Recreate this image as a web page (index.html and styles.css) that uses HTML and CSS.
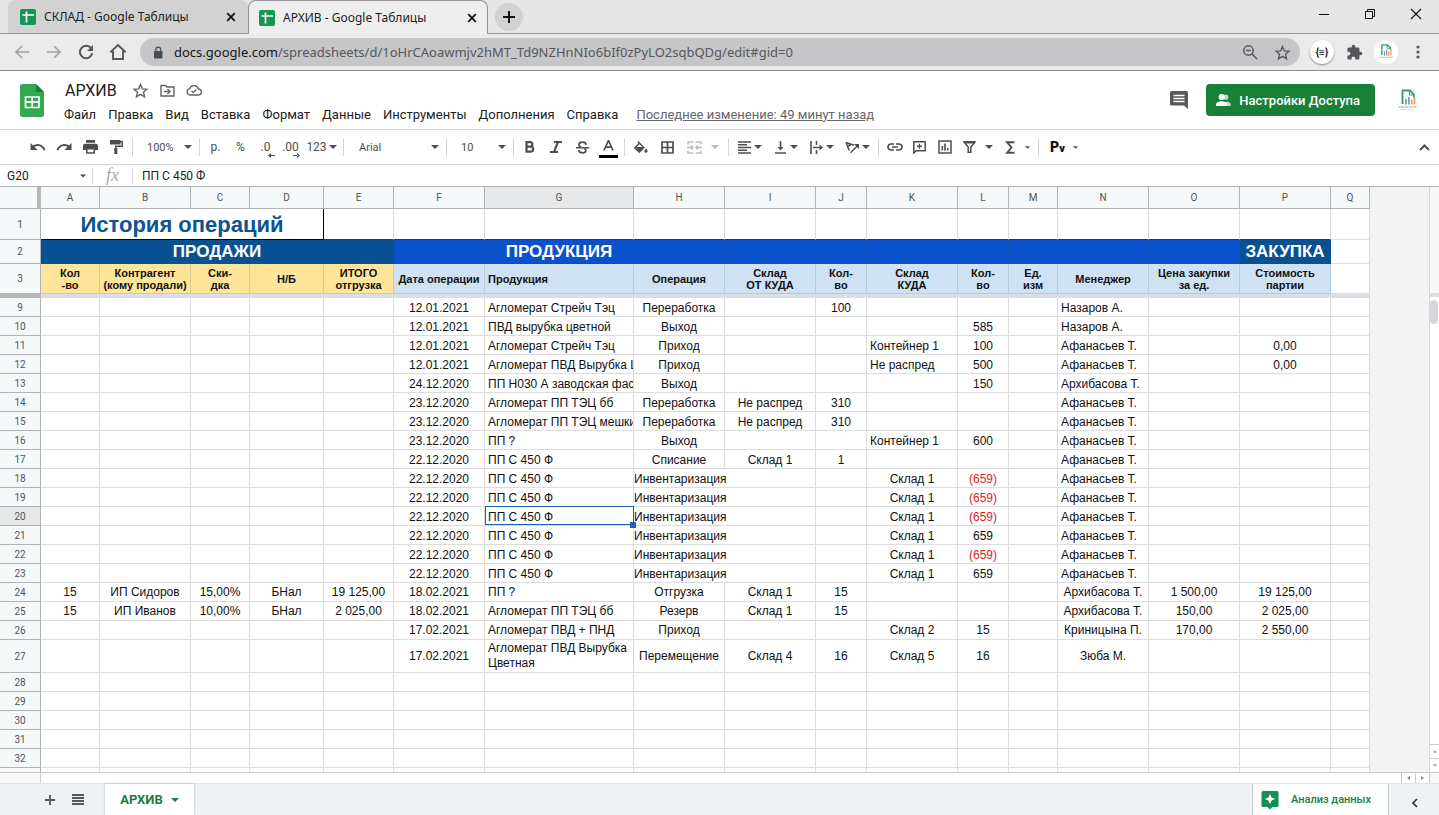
FILE: index.html
```html
<!DOCTYPE html>
<html lang="ru">
<head>
<meta charset="utf-8">
<meta name="viewport" content="width=device-width, initial-scale=1">
<title>АРХИВ - Google Таблицы</title>
<link rel="stylesheet" href="styles.css">
</head>
<body>
<svg class="defs" aria-hidden="true">
  <symbol id="caret" viewBox="0 0 8 4"><path d="M0 0h8L4 4z" fill="currentColor"/></symbol>
  <symbol id="x" viewBox="0 0 10 10"><path d="M1.200 1.200l7.600 7.600M8.800 1.200L1.200 8.800" stroke="currentColor" stroke-width="1.800" fill="none"/></symbol>
  <symbol id="favicon" viewBox="0 0 16 16"><rect width="16" height="16" rx="2" fill="#179554"/><path d="M6.500 2.500v11M2.500 6h11.500" stroke="#fff" stroke-width="1.700"/></symbol>
  <symbol id="star" viewBox="0 0 24 24"><path d="M12 3.600l2.600 6 6.500.6-4.900 4.300 1.500 6.400-5.700-3.400-5.700 3.400 1.500-6.400-4.900-4.300 6.500-.6z" fill="none" stroke="currentColor" stroke-width="1.900"/></symbol>
  <symbol id="brand" viewBox="0 0 24 24"><path d="M6.500 16V2.500H14l4 4V9" fill="none" stroke="#2f9e6c" stroke-width="1.800"/><path d="M13.500 2.500V7H18" fill="none" stroke="#2f9e6c" stroke-width="1.200"/><path d="M10 16.500V11M13 16.500V9" stroke="#6f8ca8" stroke-width="1.600"/><path d="M15.800 16.500v-5M18.500 16.500V9" stroke="#e79a52" stroke-width="1.600"/><path d="M2.500 19h19" stroke="#7fa08e" stroke-dasharray="2 .6"/><path d="M5 21.500h14" stroke="#c9d8cf" stroke-dasharray="1.500 .8"/></symbol>
</svg>

<header class="tabstrip">
  <div class="tab">
    <svg width="16" height="16"><use href="#favicon"/></svg><span>СКЛАД - Google Таблицы</span>
    <button aria-label="Закрыть вкладку"><svg width="10" height="10"><use href="#x"/></svg></button>
  </div>
  <div class="tab tab-active">
    <svg width="16" height="16"><use href="#favicon"/></svg><span>АРХИВ - Google Таблицы</span>
    <button aria-label="Закрыть вкладку"><svg width="10" height="10"><use href="#x"/></svg></button>
  </div>
  <button class="newtab" aria-label="Новая вкладка"><svg width="12" height="12" viewBox="0 0 12 12"><path d="M6 0v12M0 6h12" stroke="#111" stroke-width="2"/></svg></button>
  <div class="wincontrols">
    <button aria-label="Свернуть"><svg width="12" height="12" viewBox="0 0 12 12"><path d="M1 6.500h10" stroke="#111"/></svg></button>
    <button aria-label="Развернуть"><svg width="12" height="12" viewBox="0 0 12 12"><path d="M1.500 3.500h7v7h-7zM3.500 3.500v-2h7v7h-2" fill="none" stroke="#111"/></svg></button>
    <button aria-label="Закрыть"><svg width="12" height="12" viewBox="0 0 12 12"><path d="M1 1l10 10M11 1L1 11" stroke="#111" stroke-width="1.200"/></svg></button>
  </div>
</header>

<nav class="navbar" aria-label="Браузер">
  <button class="dim" aria-label="Назад"><svg width="16" height="16" viewBox="0 0 16 16"><path d="M15 8H2.500M8 2L2 8l6 6" fill="none" stroke="currentColor" stroke-width="1.700"/></svg></button>
  <button class="dim" aria-label="Вперёд"><svg width="16" height="16" viewBox="0 0 16 16"><path d="M1 8h12.500M8 2l6 6-6 6" fill="none" stroke="currentColor" stroke-width="1.700"/></svg></button>
  <button aria-label="Обновить"><svg width="16" height="16" viewBox="0 0 16 16"><path d="M13.200 4.500A6.200 6.200 0 1 0 14.200 9.300" fill="none" stroke="currentColor" stroke-width="2"/><path d="M15 1v6H9z" fill="currentColor"/></svg></button>
  <button aria-label="Главная"><svg width="18" height="18" viewBox="0 0 18 18"><path d="M1.300 9.300L9 2l7.700 7.300M4 8v8h10V8" fill="none" stroke="currentColor" stroke-width="1.900"/></svg></button>
  <div class="omnibox">
    <svg width="10" height="13" viewBox="0 0 10 13"><rect x="1" y="5" width="8.500" height="7.500" rx="1" fill="#4b4c50"/><path d="M2.800 5.500V3.500a2.400 2.400 0 0 1 4.800 0v2" fill="none" stroke="#4b4c50" stroke-width="1.300"/></svg>
    <span class="url"><b>docs.google.com</b>/spreadsheets/d/1oHrCAoawmjv2hMT_Td9NZHnNIo6bIf0zPyLO2sqbQDg/edit#gid=0</span>
    <button aria-label="Масштаб"><svg width="16" height="16" viewBox="0 0 16 16"><circle cx="6.500" cy="6.500" r="4.700" fill="none" stroke="currentColor" stroke-width="1.500"/><path d="M4.300 6.500h4.400M10 10l5 5" stroke="currentColor" stroke-width="1.600"/></svg></button>
    <button aria-label="В закладки"><svg width="17" height="17"><use href="#star"/></svg></button>
  </div>
  <button class="ext" aria-label="Расширение">{≡}</button>
  <button aria-label="Расширения"><svg width="17" height="17" viewBox="0 0 24 24"><path d="M20.500 11H19V7a2 2 0 0 0-2-2h-4V3.500a2.500 2.500 0 0 0-5 0V5H4a2 2 0 0 0-2 2v3.800h1.500a2.700 2.700 0 0 1 0 5.400H2V20a2 2 0 0 0 2 2h3.800v-1.500a2.700 2.700 0 0 1 5.400 0V22H17a2 2 0 0 0 2-2v-4h1.500a2.500 2.500 0 0 0 0-5z" fill="currentColor"/></svg></button>
  <button class="profile" aria-label="Профиль"><svg width="18" height="18"><use href="#brand"/></svg></button>
  <button aria-label="Меню"><svg width="4" height="14" viewBox="0 0 4 14"><g fill="currentColor"><circle cx="2" cy="2" r="1.600"/><circle cx="2" cy="7" r="1.600"/><circle cx="2" cy="12" r="1.600"/></g></svg></button>
</nav>

<section class="dochead">
  <svg class="logo" width="24" height="33" viewBox="0 0 24 33"><path d="M2.500 0H16l8 8v22.500a2.500 2.500 0 0 1-2.500 2.500h-19A2.500 2.500 0 0 1 0 30.500v-28A2.500 2.500 0 0 1 2.500 0z" fill="#34a853"/><path d="M16 0l8 8h-8z" fill="#188038"/><path d="M5.500 13h13.500v10.500H5.500zM12.200 13v10.500M5.500 18.200H19" fill="none" stroke="#fff" stroke-width="1.700"/></svg>
  <div class="docinfo">
    <div class="titleline">
      <h1>АРХИВ</h1>
      <button aria-label="Пометить"><svg width="17" height="17"><use href="#star"/></svg></button>
      <button aria-label="Переместить"><svg width="15" height="13" viewBox="0 0 15 13"><path d="M1 1.500h4.500L7 3h7v9H1z" fill="none" stroke="currentColor" stroke-width="1.400"/><path d="M4 7.500h5.500M7.500 5l2.500 2.500L7.500 10" fill="none" stroke="currentColor" stroke-width="1.300"/></svg></button>
      <button aria-label="Сохранено"><svg width="16" height="12" viewBox="0 0 16 12"><path d="M4 11a3.200 3.200 0 0 1-.3-6.300A4.500 4.500 0 0 1 12.300 5 3 3 0 0 1 12.400 11z" fill="none" stroke="currentColor" stroke-width="1.300"/><path d="M5.500 7l1.800 1.700 3-3.200" fill="none" stroke="currentColor" stroke-width="1.300"/></svg></button>
    </div>
    <div class="menus">
      <button>Файл</button><button>Правка</button><button>Вид</button><button>Вставка</button><button>Формат</button><button>Данные</button><button>Инструменты</button><button>Дополнения</button><button>Справка</button>
      <a href="#history">Последнее изменение: 49 минут назад</a>
    </div>
  </div>
  <button class="comments" aria-label="Комментарии"><svg width="18" height="18" viewBox="0 0 18 18"><path d="M1.500 0h15A1.500 1.500 0 0 1 18 1.500V18l-4-3.500H1.500A1.500 1.500 0 0 1 0 13V1.500A1.500 1.500 0 0 1 1.500 0z" fill="#57595c"/><path d="M3.500 4.500h11M3.500 7.500h11M3.500 10.500h11" stroke="#fff" stroke-width="1.500"/></svg></button>
  <button class="share"><svg width="15" height="12" viewBox="0 0 15 12"><circle cx="9.800" cy="3.200" r="2.600" fill="#b9dcc3"/><path d="M8 12V9l3-1.500c2 .3 3.800 1.200 3.800 2.700V12z" fill="#b9dcc3"/><circle cx="5.600" cy="3" r="3" fill="#fff"/><path d="M0 12v-1.500C0 8.500 3.300 7.300 5.600 7.300s5.600 1.200 5.600 3.200V12z" fill="#fff"/></svg>Настройки Доступа</button>
  <svg class="avatar" width="24" height="24"><use href="#brand"/></svg>
</section>

<div class="toolbar" role="toolbar" aria-label="Форматирование">
  <div class="group">
    <button class="tb" aria-label="Отменить"><svg width="16" height="8" viewBox="0 0 16 8"><path d="M2 4.500C6 .5 12.500 1.200 14.500 7.300" fill="none" stroke="currentColor" stroke-width="2"/><path d="M.5 0v7h7z" fill="currentColor"/></svg></button>
    <button class="tb" aria-label="Повторить"><svg width="16" height="8" viewBox="0 0 16 8"><path d="M14 4.500C10 .5 3.500 1.200 1.500 7.300" fill="none" stroke="currentColor" stroke-width="2"/><path d="M15.500 0v7h-7z" fill="currentColor"/></svg></button>
    <button class="tb" aria-label="Печать"><svg width="15" height="14" viewBox="0 0 15 14"><path d="M3 0h9v2.800H3zM2 3.800h11a2 2 0 0 1 2 2V10h-3V8H3v2H0V5.800a2 2 0 0 1 2-2z" fill="currentColor"/><path d="M3.800 8.700h7.400V13H3.800z" fill="none" stroke="currentColor" stroke-width="1.500"/></svg></button>
    <button class="tb" aria-label="Копировать форматирование"><svg width="13" height="14" viewBox="0 0 13 14"><path d="M0 0h10.500v4.500H0z" fill="currentColor"/><path d="M10 1.800h2.200v4.400H5.800V9" fill="none" stroke="currentColor" stroke-width="1.500"/><path d="M4.300 8h3v6h-3z" fill="currentColor"/></svg></button>
  </div>
  <div class="group">
    <label class="picker picker-s"><select aria-label="Масштаб"><option>100%</option></select><svg width="8" height="4"><use href="#caret"/></svg></label>
  </div>
  <div class="group">
    <button class="tb tb-n">р.</button>
    <button class="tb tb-n">%</button>
    <button class="tb tb-n dec" aria-label="Меньше знаков">.0<svg width="7" height="5" viewBox="0 0 7 5"><path d="M0 2.500L3 0v5zM2 2h5v1H2z" fill="currentColor"/></svg></button>
    <button class="tb tb-n dec" aria-label="Больше знаков">.00<svg width="7" height="5" viewBox="0 0 7 5"><path d="M7 2.500L4 0v5zM0 2h5v1H0z" fill="currentColor"/></svg></button>
    <button class="tb tb-fmt">123<svg width="8" height="4"><use href="#caret"/></svg></button>
  </div>
  <div class="group">
    <label class="picker picker-l"><select aria-label="Шрифт"><option>Arial</option></select><svg width="8" height="4"><use href="#caret"/></svg></label>
  </div>
  <div class="group">
    <label class="picker picker-s"><select aria-label="Размер шрифта"><option>10</option></select><svg width="8" height="4"><use href="#caret"/></svg></label>
  </div>
  <div class="group">
    <button class="tb" aria-label="Полужирный"><svg width="10" height="12" viewBox="0 0 10 12"><path d="M1.500 1.200h3.700a2.200 2.200 0 0 1 0 4.500H1.500zM1.500 5.700h4.200a2.500 2.500 0 0 1 0 5H1.500z" fill="none" stroke="currentColor" stroke-width="2.200"/></svg></button>
    <button class="tb" aria-label="Курсив"><svg width="12" height="12" viewBox="0 0 12 12"><path d="M4 1h8M0 11h8M8 1L4 11" fill="none" stroke="currentColor" stroke-width="2.100"/></svg></button>
    <button class="tb" aria-label="Зачеркнутый"><svg width="13" height="13" viewBox="0 0 13 13"><path d="M10 3.800C9.800 2 8.400 1.200 6.500 1.200 4.500 1.200 3 2.100 3 3.700c0 1.300.9 2 2 2.400M8.300 7.500c1 .4 1.500 1 1.500 1.900 0 1.500-1.300 2.400-3.200 2.400-2.100 0-3.600-.9-3.700-2.800" fill="none" stroke="currentColor" stroke-width="1.800"/><path d="M0 6.800h13" stroke="currentColor" stroke-width="1.500"/></svg></button>
    <button class="tb textcolor" aria-label="Цвет текста"><svg width="19" height="18" viewBox="0 0 19 18"><path d="M5 10.500L9.500 0.500l4.500 10M6.500 7.200h6" fill="none" stroke="currentColor" stroke-width="1.700"/><path d="M0 15h19v3H0z" fill="#000"/></svg></button>
  </div>
  <div class="group">
    <button class="tb" aria-label="Цвет заливки"><svg width="14" height="13" viewBox="0 0 14 13"><path d="M3.800.5l6 6-4.500 4.700L.8 6.700l5-5" fill="none" stroke="currentColor" stroke-width="1.400"/><path d="M1.500 6h8L5.300 11z" fill="currentColor"/><path d="M12 7.500c1 1.300 1.500 2 1.500 2.700a1.500 1.500 0 0 1-3 0c0-.7.5-1.400 1.500-2.700z" fill="currentColor"/></svg></button>
    <button class="tb" aria-label="Границы"><svg width="13" height="13" viewBox="0 0 13 13"><path d="M1 1h11v11H1zM6.500 1v11M1 6.500h11" fill="none" stroke="currentColor" stroke-width="1.700"/></svg></button>
    <button class="tb tb-merge" aria-label="Объединить" disabled><svg width="15" height="13" viewBox="0 0 15 13"><path d="M4.500 1H1v2.500M6.500 1H4.800M10.500 1H14v2.500M8.500 1h1.700M1 9.500V12h3.500M14 9.500V12h-3.500M6.300 12H4.800M8.700 12h1.500M0 6.500h5.500M15 6.500H9.500M4 4.500l2 2-2 2M11 4.500l-2 2 2 2" fill="none" stroke="currentColor" stroke-width="1.400"/></svg><svg width="8" height="4"><use href="#caret"/></svg></button>
  </div>
  <div class="group group-gap">
    <button class="tb tb-drop" aria-label="Горизонтальное выравнивание"><svg width="13" height="13" viewBox="0 0 13 13"><path d="M0 1h13M0 3.750h9M0 6.500h13M0 9.250h9M0 12h13" stroke="currentColor" stroke-width="1.600"/></svg><svg width="8" height="4"><use href="#caret"/></svg></button>
    <button class="tb tb-drop" aria-label="Вертикальное выравнивание"><svg width="13" height="13" viewBox="0 0 13 13"><path d="M1 12h11M6.500 0v7" stroke="currentColor" stroke-width="1.600"/><path d="M3.500 6h6l-3 3.500z" fill="currentColor"/></svg><svg width="8" height="4"><use href="#caret"/></svg></button>
    <button class="tb tb-drop" aria-label="Перенос текста"><svg width="13" height="13" viewBox="0 0 13 13"><path d="M1 0v13M6.500 0v4M6.500 9v4M3 6.500h7.500" stroke="currentColor" stroke-width="1.600"/><path d="M9.500 3.500v6l3.500-3z" fill="currentColor"/></svg><svg width="8" height="4"><use href="#caret"/></svg></button>
    <button class="tb tb-drop" aria-label="Поворот текста"><svg width="14" height="13" viewBox="0 0 14 13"><path d="M1 1.500l8 2.800M1 1.500l3.200 8M2.500 5.500L6 3.500M5.500 11.800l7-7" fill="none" stroke="currentColor" stroke-width="1.500"/><path d="M9 3h5v5z" fill="currentColor"/></svg><svg width="8" height="4"><use href="#caret"/></svg></button>
  </div>
  <div class="group">
    <button class="tb tb-n" aria-label="Ссылка"><svg width="16" height="8" viewBox="0 0 16 8"><path d="M7 1H4a3 3 0 0 0 0 6h3M9 1h3a3 3 0 0 1 0 6H9M5 4h6" fill="none" stroke="currentColor" stroke-width="1.700"/></svg></button>
    <button class="tb tb-n" aria-label="Комментарий"><svg width="13" height="13" viewBox="0 0 13 13"><path d="M.8.8h11.400v9H3.200L.8 12z" fill="none" stroke="currentColor" stroke-width="1.500"/><path d="M6.500 2.800v5M4 5.300h5" stroke="currentColor" stroke-width="1.400"/></svg></button>
    <button class="tb tb-n" aria-label="Диаграмма"><svg width="14" height="14" viewBox="0 0 14 14"><path d="M1 1h12v12H1z" fill="none" stroke="currentColor" stroke-width="1.500"/><path d="M4.300 10.500V6M7 10.500v-7M9.700 10.500V8" stroke="currentColor" stroke-width="1.600"/></svg></button>
    <button class="tb tb-filter" aria-label="Фильтр"><svg width="13" height="12" viewBox="0 0 13 12"><path d="M1 1h11L7.800 6v5.200H5.200V6z" fill="none" stroke="currentColor" stroke-width="1.500"/><path d="M1 0h11v2.500H2z" fill="currentColor"/></svg><svg width="8" height="4"><use href="#caret"/></svg></button>
    <button class="tb tb-sum" aria-label="Функции"><svg width="10" height="13" viewBox="0 0 10 13"><path d="M9.500 1.200H2l4.500 5.300L2 11.800h7.500" fill="none" stroke="currentColor" stroke-width="1.900"/></svg><svg width="5" height="3"><use href="#caret"/></svg></button>
  </div>
  <button class="tb tb-py">P<small>v</small><svg width="5" height="3"><use href="#caret"/></svg></button>
  <button class="tb collapse" aria-label="Свернуть панель"><svg width="11" height="7" viewBox="0 0 11 7"><path d="M1 6l4.500-4.500L10 6" fill="none" stroke="currentColor" stroke-width="2"/></svg></button>
</div>

<div class="formula">
  <label class="namebox"><input aria-label="Диапазон" value="G20"><svg width="6" height="4"><use href="#caret"/></svg></label>
  <i class="fx">fx</i>
  <input class="fxinput" aria-label="Формула" value="ПП С 450 Ф">
</div>

<main class="sheet">
  <div class="viewport">
    <table>
      <colgroup><col class="w41"><col class="w59"><col class="w91"><col class="w59"><col class="w74"><col class="w70"><col class="w91"><col class="w149"><col class="w91"><col class="w91"><col class="w51"><col class="w91"><col class="w51"><col class="w49"><col class="w91"><col class="w91"><col class="w91"><col class="w39"></colgroup>
      <thead>
        <tr><th class="corner"></th><th>A</th><th>B</th><th>C</th><th>D</th><th>E</th><th>F</th><th class="on">G</th><th>H</th><th>I</th><th>J</th><th>K</th><th>L</th><th>M</th><th>N</th><th>O</th><th>P</th><th>Q</th></tr>
      </thead>
      <tbody>
        <tr class="r1"><th>1</th><td colspan="4" class="title">История операций</td><td><td><td><td><td><td><td><td><td><td><td><td><td class="plain"></tr>
        <tr class="r2"><th>2</th><td colspan="5" class="navy">ПРОДАЖИ</td><td><td>ПРОДУКЦИЯ<td><td><td><td><td><td><td><td><td class="navy">ЗАКУПКА<td class="plain"></tr>
        <tr class="r3"><th>3</th><td class="gold">Кол<br>-во<td class="gold">Контрагент<br>(кому продали)<td class="gold">Ски-<br>дка<td class="gold">Н/Б<td class="gold">ИТОГО<br>отгрузка<td>Дата операции<td class="l">Продукция<td>Операция<td>Склад<br>ОТ КУДА<td>Кол-<br>во<td>Склад<br>КУДА<td>Кол-<br>во<td>Ед.<br>изм<td>Менеджер<td>Цена закупки<br>за ед.<td>Стоимость<br>партии<td class="plain"></tr>
        <tr class="freeze"><th></th><td colspan="17"></td></tr>
        <tr><th>9</th><td><td><td><td><td><td>12.01.2021<td class="l">Агломерат Стрейч Тэц<td>Переработка<td><td>100<td><td><td><td class="l">Назаров А.<td><td><td></tr>
        <tr><th>10</th><td><td><td><td><td><td>12.01.2021<td class="l">ПВД вырубка цветной<td>Выход<td><td><td><td>585<td><td class="l">Назаров А.<td><td><td></tr>
        <tr><th>11</th><td><td><td><td><td><td>12.01.2021<td class="l">Агломерат Стрейч Тэц<td>Приход<td><td><td class="l">Контейнер 1<td>100<td><td class="l">Афанасьев Т.<td><td>0,00<td></tr>
        <tr><th>12</th><td><td><td><td><td><td>12.01.2021<td class="l">Агломерат ПВД Вырубка Ц<td>Приход<td><td><td class="l">Не распред<td>500<td><td class="l">Афанасьев Т.<td><td>0,00<td></tr>
        <tr><th>13</th><td><td><td><td><td><td>24.12.2020<td class="l">ПП Н030 А заводская фас<td>Выход<td><td><td><td>150<td><td class="l">Архибасова Т.<td><td><td></tr>
        <tr><th>14</th><td><td><td><td><td><td>23.12.2020<td class="l">Агломерат ПП ТЭЦ бб<td>Переработка<td>Не распред<td>310<td><td><td><td class="l">Афанасьев Т.<td><td><td></tr>
        <tr><th>15</th><td><td><td><td><td><td>23.12.2020<td class="l">Агломерат ПП ТЭЦ мешки<td>Переработка<td>Не распред<td>310<td><td><td><td class="l">Афанасьев Т.<td><td><td></tr>
        <tr><th>16</th><td><td><td><td><td><td>23.12.2020<td class="l">ПП ?<td>Выход<td><td><td class="l">Контейнер 1<td>600<td><td class="l">Афанасьев Т.<td><td><td></tr>
        <tr><th>17</th><td><td><td><td><td><td>22.12.2020<td class="l">ПП С 450 Ф<td>Списание<td>Склад 1<td>1<td><td><td><td class="l">Афанасьев Т.<td><td><td></tr>
        <tr><th>18</th><td><td><td><td><td><td>22.12.2020<td class="l">ПП С 450 Ф<td class="spill">Инвентаризация<td><td><td>Склад 1<td class="neg">(659)<td><td class="l">Афанасьев Т.<td><td><td></tr>
        <tr><th>19</th><td><td><td><td><td><td>22.12.2020<td class="l">ПП С 450 Ф<td class="spill">Инвентаризация<td><td><td>Склад 1<td class="neg">(659)<td><td class="l">Афанасьев Т.<td><td><td></tr>
        <tr><th class="on">20</th><td><td><td><td><td><td>22.12.2020<td class="l selected">ПП С 450 Ф<td class="spill">Инвентаризация<td><td><td>Склад 1<td class="neg">(659)<td><td class="l">Афанасьев Т.<td><td><td></tr>
        <tr><th>21</th><td><td><td><td><td><td>22.12.2020<td class="l">ПП С 450 Ф<td class="spill">Инвентаризация<td><td><td>Склад 1<td>659<td><td class="l">Афанасьев Т.<td><td><td></tr>
        <tr><th>22</th><td><td><td><td><td><td>22.12.2020<td class="l">ПП С 450 Ф<td class="spill">Инвентаризация<td><td><td>Склад 1<td class="neg">(659)<td><td class="l">Афанасьев Т.<td><td><td></tr>
        <tr><th>23</th><td><td><td><td><td><td>22.12.2020<td class="l">ПП С 450 Ф<td class="spill">Инвентаризация<td><td><td>Склад 1<td>659<td><td class="l">Афанасьев Т.<td><td><td></tr>
        <tr class="mid"><th>24</th><td>15<td>ИП Сидоров<td>15,00%<td>БНал<td>19 125,00<td>18.02.2021<td class="l">ПП ?<td>Отгрузка<td>Склад 1<td>15<td><td><td><td>Архибасова Т.<td>1 500,00<td>19 125,00<td></tr>
        <tr class="mid"><th>25</th><td>15<td>ИП Иванов<td>10,00%<td>БНал<td>2 025,00<td>18.02.2021<td class="l">Агломерат ПП ТЭЦ бб<td>Резерв<td>Склад 1<td>15<td><td><td><td>Архибасова Т.<td>150,00<td>2 025,00<td></tr>
        <tr class="mid"><th>26</th><td><td><td><td><td><td>17.02.2021<td class="l">Агломерат ПВД + ПНД<td>Приход<td><td><td>Склад 2<td>15<td><td>Криницына П.<td>170,00<td>2 550,00<td></tr>
        <tr class="tall"><th>27</th><td><td><td><td><td><td>17.02.2021<td class="l">Агломерат ПВД Вырубка<br>Цветная<td>Перемещение<td>Склад 4<td>16<td>Склад 5<td>16<td><td>Зюба М.<td><td><td></tr>
        <tr><th>28</th><td><td><td><td><td><td><td><td><td><td><td><td><td><td><td><td><td></tr>
        <tr><th>29</th><td><td><td><td><td><td><td><td><td><td><td><td><td><td><td><td><td></tr>
        <tr><th>30</th><td><td><td><td><td><td><td><td><td><td><td><td><td><td><td><td><td></tr>
        <tr><th>31</th><td><td><td><td><td><td><td><td><td><td><td><td><td><td><td><td><td></tr>
        <tr><th>32</th><td><td><td><td><td><td><td><td><td><td><td><td><td><td><td><td><td></tr>
        <tr><th></th><td><td><td><td><td><td><td><td><td><td><td><td><td><td><td><td><td></tr>
      </tbody>
    </table>
  </div>
  <div class="vscroll">
    <div class="vhead"></div>
    <div class="thumb"></div>
    <button class="up" aria-label="Вверх"><svg width="4" height="3" viewBox="0 0 8 4"><path d="M0 4h8L4 0z" fill="currentColor"/></svg></button>
    <button aria-label="Вниз"><svg width="4" height="3"><use href="#caret"/></svg></button>
  </div>
  <div class="hscroll">
    <span class="stub"></span>
    <button aria-label="Влево"><svg width="3" height="4" viewBox="0 0 3 4"><path d="M3 0v4L0 2z" fill="currentColor"/></svg></button>
    <button aria-label="Вправо"><svg width="3" height="4" viewBox="0 0 3 4"><path d="M0 0v4l3-2z" fill="currentColor"/></svg></button>
  </div>
  <div class="scrollcorner"></div>
</main>

<footer class="sheetbar">
  <button class="add" aria-label="Добавить лист"><svg width="10" height="10" viewBox="0 0 10 10"><path d="M5 0v10M0 5h10" stroke="currentColor" stroke-width="1.800"/></svg></button>
  <button class="add" aria-label="Все листы"><svg width="12" height="11" viewBox="0 0 12 11"><path d="M0 1h12M0 4h12M0 7h12M0 10h12" stroke="currentColor" stroke-width="1.800"/></svg></button>
  <button class="sheettab">АРХИВ<svg width="8" height="4"><use href="#caret"/></svg></button>
  <button class="explore"><svg width="18" height="20" viewBox="0 0 18 20"><path d="M2 1h14a1.500 1.500 0 0 1 1.500 1.500v13A1.500 1.500 0 0 1 16 17h-4.500L9 19.500 6.500 17H2a1.500 1.500 0 0 1-1.500-1.500v-13A1.500 1.500 0 0 1 2 1z" fill="#149152"/><path d="M9 3.800l1.500 3.700L14.200 9l-3.700 1.500L9 14.200l-1.500-3.700L3.800 9l3.700-1.500z" fill="#fff"/></svg>Анализ данных</button>
  <button class="side" aria-label="Боковая панель"><svg width="7" height="10" viewBox="0 0 7 10"><path d="M6 1L2 5l4 4" fill="none" stroke="#333" stroke-width="1.700"/></svg></button>
</footer>
</body>
</html>
```
FILE: styles.css
```css
* { box-sizing: border-box; }

html, body { height: 100%; }

body {
  margin: 0;
  display: flex;
  flex-direction: column;
  height: 100vh;
  overflow: hidden;
  background: #fff;
  color: #202124;
  font-family: Roboto, "Liberation Sans", sans-serif;
  font-size: 12px;
}

button, input, select {
  font: inherit;
  color: inherit;
  background: none;
  border: 0;
  padding: 0;
  margin: 0;
  appearance: none;
  outline: none;
}

button { display: inline-flex; align-items: center; justify-content: center; }
svg { flex: none; display: block; }
.defs { position: absolute; width: 0; height: 0; }

/* Browser tabs */
.tabstrip {
  display: flex;
  align-items: stretch;
  height: 34px;
  padding-left: 8px;
  background: #e6e6e6;
  border-bottom: 1px solid #949292;
  font-family: "Noto Sans", "Open Sans", sans-serif;
  color: #1c1c1c;
}
.tab {
  display: flex;
  align-items: center;
  width: 240px;
  padding: 0 12px;
  gap: 8px;
  background: #d2d2d2;
  border-radius: 8px 8px 0 0;
}
.tab span { flex: 1; white-space: nowrap; }
.tab button { width: 10px; height: 16px; color: #111; }
.tab-active {
  background: #eee;
  border: 1px solid #949292;
  border-bottom: 0;
  margin-bottom: -1px;
  padding: 0 10px;
}
.newtab {
  width: 28px;
  height: 28px;
  margin: 3px 0 0 7px;
  border-radius: 50%;
  background: #d2d2d2;
}
.wincontrols { display: flex; margin-left: auto; height: 28px; }
.wincontrols button { width: 46px; }

/* Address row */
.navbar {
  display: flex;
  align-items: center;
  height: 37px;
  padding: 0 5px 0 6px;
  background: #ebebeb;
  border-bottom: 1px solid #8e8b8b;
  color: #55575b;
}
.navbar button { width: 32px; height: 28px; }
.navbar .dim { color: #a3a3a3; }
.omnibox {
  flex: 1;
  display: flex;
  align-items: center;
  height: 28px;
  margin: 0 6px;
  padding: 0 2px 0 13px;
  border-radius: 14px;
  background: #c6c6c8;
}
.url {
  flex: 1;
  padding-left: 11px;
  font-family: "Noto Sans", "Open Sans", sans-serif;
  font-size: 13px;
  white-space: nowrap;
  overflow: hidden;
}
.url b { font-weight: 400; color: #151515; }
.navbar .ext, .navbar .profile {
  width: 24px;
  height: 24px;
  margin: 0 4px;
  border-radius: 50%;
  background: #fff;
}
.navbar .ext {
  box-shadow: 0 1px 2px #888;
  color: #111;
  font-weight: 700;
  font-size: 10px;
}

/* Document header */
.dochead {
  display: flex;
  align-items: center;
  height: 59px;
  padding: 0 19px 0 20px;
  border-bottom: 1px solid #d5d5d5;
}
.docinfo { flex: 1; padding: 4px 0 0 14px; }
.titleline { display: flex; align-items: center; height: 24px; padding-left: 7px; color: #5f6368; }
h1 { margin: 0 10px 0 0; font-size: 16px; font-weight: 400; color: #202124; }
.titleline button { width: 27px; height: 20px; }
.menus { display: flex; align-items: center; height: 24px; font-size: 13px; white-space: nowrap; }
.menus button { padding: 0 6px; }
.menus a { margin-left: 12px; color: #63666a; }
.comments { margin-right: 18px; }
.share {
  height: 32px;
  padding: 0 15px 0 10px;
  gap: 8px;
  border-radius: 4px;
  background: #188038;
  color: #fff;
  font-weight: 500;
  font-size: 13px;
  white-space: nowrap;
}
.avatar { margin-left: 21px; }

/* Formatting toolbar */
.toolbar {
  display: flex;
  align-items: center;
  height: 35px;
  padding: 0 2px 0 22px;
  border-bottom: 1px solid #d5d5d5;
  color: #4b4e51;
}
.group {
  display: flex;
  align-items: center;
  height: 18px;
  padding: 0 3px;
  border-right: 1px solid #d5d5d5;
}
.group-gap { gap: 1px; }
.tb { width: 26px; height: 24px; }
.tb-n { width: 25px; }
.dec { position: relative; }
.dec svg { position: absolute; right: 3px; bottom: 1px; }
.tb-fmt { width: 37px; gap: 2px; }
.tb-merge { width: 45px; gap: 9px; color: #b9bbbd; }
.tb-drop { width: 35px; gap: 3px; }
.tb-filter { width: 42px; gap: 9px; }
.tb-sum { width: 36px; gap: 10px; }
.tb-py { width: 50px; color: #111; font-weight: 900; font-size: 14px; }
.tb-py small { font-size: 11px; padding-top: 2px; }
.tb-py svg { margin-left: 8px; color: #4b4e51; }
.textcolor { padding-top: 4px; }
.collapse { margin-left: auto; }
.picker { display: flex; align-items: center; justify-content: space-between; padding-right: 4px; }
.picker select { flex: 1; min-width: 0; font-size: 11px; }
.picker-s { width: 60px; padding-left: 11px; }
.picker-l { width: 96px; padding-left: 12px; }

/* Formula row */
.formula { display: flex; align-items: center; height: 21px; }
.namebox {
  display: flex;
  align-items: center;
  width: 93px;
  height: 16px;
  padding: 0 6px 0 7px;
  border-right: 1px solid #d5d5d5;
  color: #4b4e51;
}
.namebox input { flex: 1; min-width: 0; color: #202124; }
.fx {
  width: 40px;
  height: 16px;
  line-height: 14px;
  text-align: center;
  border-right: 1px solid #d5d5d5;
  color: #aaa;
  font-family: "Liberation Serif", serif;
  font-size: 18px;
}
.fxinput { flex: 1; padding-left: 9px; }

/* Grid */
.sheet {
  flex: 1;
  min-height: 0;
  display: grid;
  grid-template-columns: 1fr 10px;
  grid-template-rows: 1fr 11px;
  border-top: 1px solid #b0b3b5;
}
.viewport { overflow: hidden; background: #f3f3f3; min-height: 0; }
table {
  width: 1370px;
  table-layout: fixed;
  border-collapse: separate;
  border-spacing: 0;
  background: #fff;
  font-family: "Liberation Sans", sans-serif;
  font-size: 12px;
  line-height: 15px;
  color: #111;
}
.w39 { width: 39px; }
.w41 { width: 41px; }
.w49 { width: 49px; }
.w51 { width: 51px; }
.w59 { width: 59px; }
.w70 { width: 70px; }
.w74 { width: 74px; }
.w91 { width: 91px; }
.w149 { width: 149px; }

tr { height: 19px; }
td, th {
  padding: 0;
  white-space: nowrap;
  text-align: center;
  border-right: 1px solid #dcdcdc;
  border-bottom: 1px solid #dcdcdc;
}
td { vertical-align: bottom; padding-top: 1px; }
th {
  background: #f6f9fa;
  border-color: #b0b3b5;
  color: #505356;
  font-family: Roboto, sans-serif;
  font-size: 10px;
  font-weight: 400;
}
th.on { background: #e6e8e9; }
thead tr { height: 22px; }
.corner { border-right: 4px solid #b7b7b7; }
.l { text-align: left; padding-left: 3px; overflow: hidden; }
.mid td, .tall td { vertical-align: middle; padding-top: 0; }
.tall { height: 33px; }
.tall td { line-height: 15px; }
.spill { border-right-color: transparent; }
.neg { color: #d8232a; }

.selected { position: relative; overflow: visible; }
.selected::before {
  content: "";
  position: absolute;
  inset: -1px -1px 0 0;
  border: 1px solid #1a5fb4;
}
.selected::after {
  content: "";
  position: absolute;
  right: -3px;
  bottom: -3px;
  width: 6px;
  height: 6px;
  background: #1b62bf;
}

.r1 { height: 31px; }
.r1 td { border-bottom-color: #0c3f7c; }
.r1 .title {
  vertical-align: middle;
  border-right-color: #000;
  border-bottom-color: #000;
  color: #0b5394;
  font-size: 22px;
  font-weight: 700;
  line-height: 28px;
}
.r2 { height: 24px; }
.r2 td {
  vertical-align: middle;
  padding: 0;
  background: #0b50cc;
  border-color: #0f4dbb;
  color: #fff;
  font-size: 17px;
  font-weight: 700;
  line-height: 22px;
}
.r2 .navy { background: #0a5193; border-color: #0a5193; }
.r3 { height: 30px; }
.r3 td {
  vertical-align: middle;
  padding-top: 0;
  background: #cfe2f3;
  border-color: #b4cadd;
  font-size: 11px;
  font-weight: 700;
  line-height: 12px;
}
.r3 .gold { background: #ffe599; border-color: #dcc98f; }
.r1 .plain, .r2 .plain, .r3 .plain { border-color: #dcdcdc; }
.r2 .plain, .r3 .plain { background: #fff; }
.freeze { height: 4px; }
.freeze th, .freeze td { padding: 0; border: 0; background: #dadfe5; }
.freeze th { background: #b7b7b7; }

/* Scrollbars */
.vscroll {
  display: flex;
  flex-direction: column;
  background: #fff;
  border-left: 1px solid #d5d5d5;
  color: #888;
}
.vhead { height: 110px; background: #f8f8f8; border-bottom: 4px solid #dadfe5; }
.thumb { height: 24px; margin: 3px 1px 0 0; border-radius: 4px; background: #d5d7da; }
.vscroll button { height: 14px; border-top: 1px solid #d0d0d0; }
.vscroll .up { margin-top: auto; }
.hscroll { display: flex; border-top: 1px solid #c8cacc; background: #fff; color: #888; }
.stub { width: 41px; margin-right: auto; background: #f8f8f8; border-right: 1px solid #d0d0d0; }
.hscroll button { width: 14px; border-left: 1px solid #c8cacc; }
.scrollcorner { background: #f8f8f8; border-top: 1px solid #c8cacc; border-left: 1px solid #c8cacc; }

/* Sheet tabs */
.sheetbar {
  display: flex;
  height: 32px;
  padding-left: 36px;
  background: #eff2f4;
  border-top: 1px solid #dfe2e4;
  color: #55585b;
}
.add { width: 28px; }
.sheettab {
  width: 89px;
  margin-left: 13px;
  gap: 8px;
  background: #fff;
  color: #1d7c41;
  font-size: 13px;
  font-weight: 700;
  box-shadow: 0 0 2px #aab0b5;
}
.explore {
  width: 137px;
  margin-left: auto;
  padding-right: 9px;
  gap: 12px;
  background: #fcfdfd;
  border: solid #c8cacc;
  border-width: 0 1px;
  color: #1d7c41;
  font-size: 11px;
  font-weight: 500;
}
.side { width: 50px; padding-top: 6px; }
```
